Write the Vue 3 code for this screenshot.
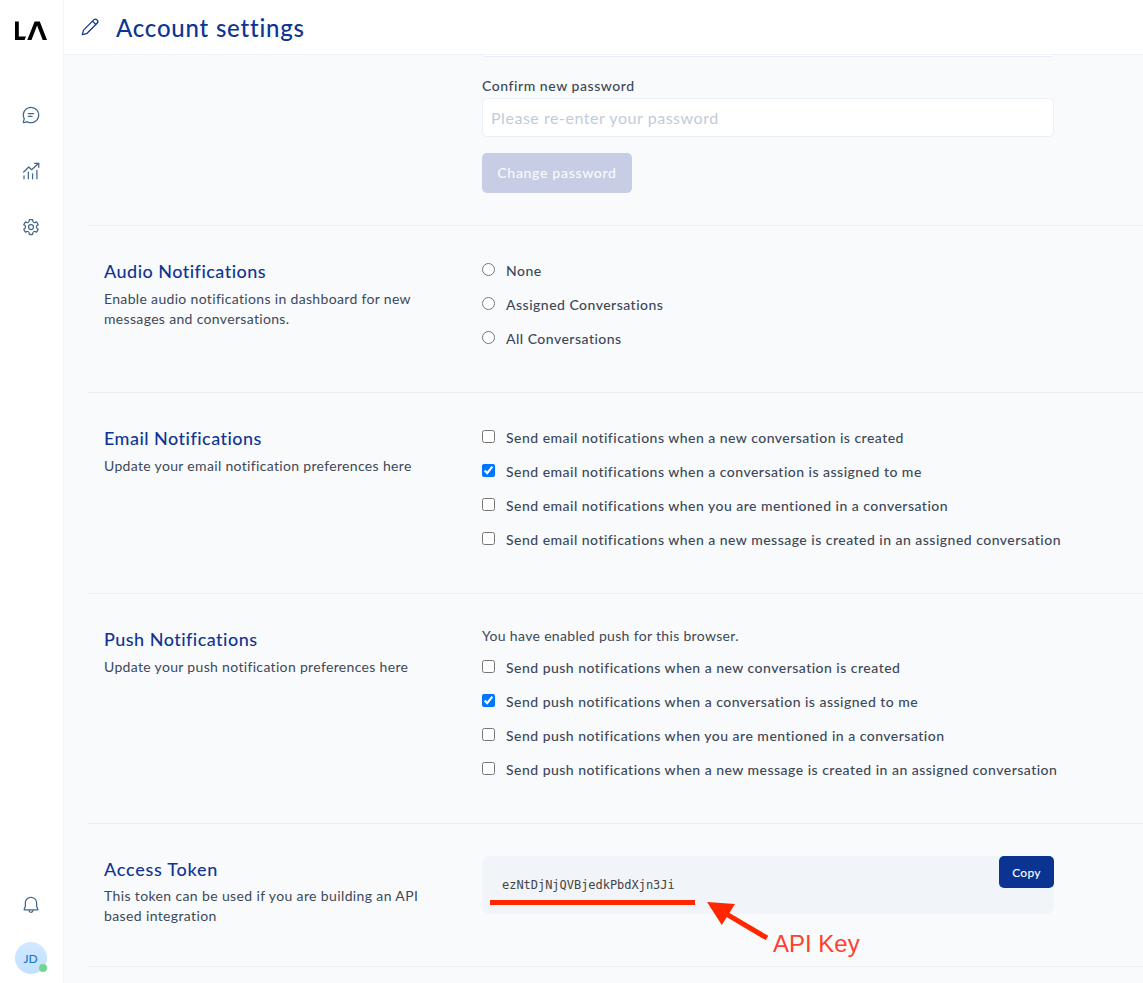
<script setup>
import { ref } from 'vue'

const audio = ref('')
const audioOptions = ['None', 'Assigned Conversations', 'All Conversations']

const email = ref([
  { text: 'Send email notifications when a new conversation is created', on: false },
  { text: 'Send email notifications when a conversation is assigned to me', on: true },
  { text: 'Send email notifications when you are mentioned in a conversation', on: false },
  { text: 'Send email notifications when a new message is created in an assigned conversation', on: false },
])
const push = ref([
  { text: 'Send push notifications when a new conversation is created', on: false },
  { text: 'Send push notifications when a conversation is assigned to me', on: true },
  { text: 'Send push notifications when you are mentioned in a conversation', on: false },
  { text: 'Send push notifications when a new message is created in an assigned conversation', on: false },
])
</script>

<template>
  <div class="app">
    <aside class="sidebar">
      <svg class="logo" viewBox="0 0 32 20" width="32" height="20">
        <path d="M0 0.5H3.8V15.4H11L9.6 19H0Z" />
        <path d="M12.3 19 19.6 0.5H24.8L32 19H27.7L22.1 4.6 16.5 19Z" />
      </svg>
      <nav class="nav">
        <svg class="icon" viewBox="0 0 24 24"><path d="M12 2c5.523 0 10 4.477 10 10s-4.477 10-10 10a9.96 9.96 0 0 1-4.587-1.112l-3.826 1.067a1.25 1.25 0 0 1-1.54-1.54l1.068-3.823A9.96 9.96 0 0 1 2 12C2 6.477 6.477 2 12 2Zm0 1.5A8.5 8.5 0 0 0 3.5 12c0 1.47.373 2.883 1.073 4.137l.15.27-1.112 3.984 3.987-1.112.27.15A8.5 8.5 0 1 0 12 3.5ZM8.75 13h4.498a.75.75 0 0 1 .102 1.493l-.102.007H8.75a.75.75 0 0 1-.102-1.493L8.75 13h4.498H8.75Zm0-3.5h6.505a.75.75 0 0 1 .101 1.493l-.101.007H8.75a.75.75 0 0 1-.102-1.493L8.75 9.5h6.505H8.75Z" /></svg>
        <svg class="icon line" viewBox="0 0 24 24"><path d="M3.2 13.2 9.3 7.2 12.8 10.4 21.1 2.8M16.3 2.7H21.3V7.6M3.6 17.8V21.3M8.8 13.2V21.3M13.9 15.4V21.3M19.1 11.2V21.3" /></svg>
        <svg class="icon" viewBox="0 0 24 24"><path d="M12.012 2.25c.734.008 1.465.093 2.182.253a.75.75 0 0 1 .582.649l.17 1.527a1.384 1.384 0 0 0 1.927 1.116l1.401-.615a.75.75 0 0 1 .85.174 9.792 9.792 0 0 1 2.204 3.792.75.75 0 0 1-.271.825l-1.242.916a1.381 1.381 0 0 0 0 2.226l1.243.915a.75.75 0 0 1 .272.826 9.797 9.797 0 0 1-2.204 3.792.75.75 0 0 1-.848.175l-1.407-.617a1.38 1.38 0 0 0-1.926 1.114l-.169 1.526a.75.75 0 0 1-.572.647 9.518 9.518 0 0 1-4.406 0 .75.75 0 0 1-.572-.647l-.168-1.524a1.382 1.382 0 0 0-1.926-1.11l-1.406.616a.75.75 0 0 1-.849-.175 9.798 9.798 0 0 1-2.204-3.796.75.75 0 0 1 .272-.826l1.243-.916a1.38 1.38 0 0 0 0-2.226l-1.243-.914a.75.75 0 0 1-.271-.826 9.793 9.793 0 0 1 2.204-3.792.75.75 0 0 1 .85-.174l1.4.615a1.387 1.387 0 0 0 1.93-1.118l.17-1.526a.75.75 0 0 1 .583-.65c.717-.159 1.45-.243 2.201-.252Zm0 1.5a9.135 9.135 0 0 0-1.354.117l-.109.977A2.886 2.886 0 0 1 6.525 7.17l-.898-.394a8.293 8.293 0 0 0-1.348 2.317l.798.587a2.881 2.881 0 0 1 0 4.643l-.799.588c.32.842.776 1.626 1.348 2.322l.905-.397a2.882 2.882 0 0 1 4.017 2.318l.11.984c.889.15 1.798.15 2.687 0l.11-.984a2.881 2.881 0 0 1 4.018-2.322l.905.396a8.296 8.296 0 0 0 1.347-2.318l-.798-.588a2.881 2.881 0 0 1 0-4.643l.796-.587a8.293 8.293 0 0 0-1.348-2.317l-.896.393a2.884 2.884 0 0 1-4.023-2.324l-.11-.976a8.988 8.988 0 0 0-1.333-.117ZM12 8.25a3.75 3.75 0 1 1 0 7.5 3.75 3.75 0 0 1 0-7.5Zm0 1.5a2.25 2.25 0 1 0 0 4.5 2.25 2.25 0 0 0 0-4.5Z" /></svg>
      </nav>
      <svg class="icon bell" viewBox="0 0 24 24"><path d="M12 1.996a7.49 7.49 0 0 1 7.496 7.25l.004.25v4.097l1.38 3.156a1.25 1.25 0 0 1-1.145 1.75L15 18.502a3 3 0 0 1-5.995.177L9 18.499H4.275a1.251 1.251 0 0 1-1.147-1.747L4.5 13.594V9.496c0-4.155 3.352-7.5 7.5-7.5ZM13.5 18.5l-3 .002a1.5 1.5 0 0 0 2.993.145l.006-.147ZM12 3.496c-3.32 0-6 2.674-6 6v4.41L4.656 17h14.697L18 13.907V9.509l-.004-.225A5.988 5.988 0 0 0 12 3.496Z" /></svg>
      <div class="avatar">JD<span class="status"></span></div>
    </aside>

    <div class="main">
      <header class="header">
        <svg class="edit" viewBox="0 0 24 24"><path d="M21.03 2.97a3.578 3.578 0 0 1 0 5.06L9.062 20a2.25 2.25 0 0 1-.999.58l-5.116 1.395a.75.75 0 0 1-.92-.921l1.395-5.116a2.25 2.25 0 0 1 .58-.999L15.97 2.97a3.578 3.578 0 0 1 5.06 0ZM15 6.06 5.062 16a.75.75 0 0 0-.193.333l-1.05 3.85 3.85-1.05A.75.75 0 0 0 8 18.938L17.94 9 15 6.06Zm2.03-2.03-.97.97L19 7.94l.97-.97a2.079 2.079 0 0 0-2.94-2.94Z" /></svg>
        <h1>Account settings</h1>
      </header>

      <div class="content">
        <section class="section password">
          <div class="intro"></div>
          <div class="fields">
            <div class="field-end"></div>
            <label class="field-label" for="confirm">Confirm new password</label>
            <input id="confirm" class="text-input" type="password" placeholder="Please re-enter your password" />
            <button class="change" disabled>Change password</button>
          </div>
        </section>

        <section class="section">
          <div class="intro">
            <h2>Audio Notifications</h2>
            <p>Enable audio notifications in dashboard for new<br />messages and conversations.</p>
          </div>
          <div class="fields">
            <label v-for="o in audioOptions" :key="o" class="option">
              <input v-model="audio" type="radio" name="audio" :value="o" /><span>{{ o }}</span>
            </label>
          </div>
        </section>

        <section class="section">
          <div class="intro">
            <h2>Email Notifications</h2>
            <p>Update your email notification preferences here</p>
          </div>
          <div class="fields">
            <label v-for="o in email" :key="o.text" class="option">
              <input v-model="o.on" type="checkbox" /><span>{{ o.text }}</span>
            </label>
          </div>
        </section>

        <section class="section">
          <div class="intro">
            <h2>Push Notifications</h2>
            <p>Update your push notification preferences here</p>
          </div>
          <div class="fields">
            <p class="push-state">You have enabled push for this browser.</p>
            <label v-for="o in push" :key="o.text" class="option">
              <input v-model="o.on" type="checkbox" /><span>{{ o.text }}</span>
            </label>
          </div>
        </section>

        <section class="section">
          <div class="intro token-intro">
            <h2>Access Token</h2>
            <p>This token can be used if you are building an API<br />based integration</p>
          </div>
          <div class="fields">
            <div class="token">
              <code>ezNtDjNjQVBjedkPbdXjn3Ji</code>
              <button class="copy">Copy</button>
              <div class="underline"></div>
              <svg class="arrow" viewBox="0 0 62 38" width="62" height="38">
                <path class="shaft" d="M60 36 20 12.3" />
                <path class="head" d="M0 0 28 2 14.8 23Z" />
              </svg>
              <span class="note">API Key</span>
            </div>
          </div>
        </section>
        <div class="section last"></div>
      </div>
    </div>
  </div>
</template>

<style>
body {
  margin: 0;
  overflow: hidden;
}
</style>

<style scoped>
.app {
  display: flex;
  height: 983px;
  overflow: hidden;
  background: #f9fafc;
  color: #3c4858;
  font-family: Lato, "Open Sans", sans-serif;
  font-size: 14px;
}
.app * {
  box-sizing: border-box;
}
.sidebar {
  display: flex;
  flex-direction: column;
  align-items: center;
  flex: none;
  width: 64px;
  padding: 21px 2px 9px 0;
  background: #fff;
  border-right: 1px solid #f0f4f8;
}
.logo {
  display: block;
  fill: #000;
}
.nav {
  display: flex;
  flex-direction: column;
  gap: 36px;
  margin-top: 64px;
}
.icon {
  display: block;
  width: 20px;
  height: 20px;
  fill: #446888;
}
.line {
  fill: none;
  stroke: #446888;
  stroke-width: 1.5;
  stroke-linecap: round;
  stroke-linejoin: round;
}
.bell {
  margin-top: auto;
}
.avatar {
  position: relative;
  display: flex;
  align-items: center;
  justify-content: center;
  width: 32px;
  height: 32px;
  margin-top: 27px;
  border-radius: 50%;
  background: linear-gradient(#d2e8ff, #c2e1ff);
  color: #1976cc;
  font: 500 12px Lato, sans-serif;
  padding-top: 1px;
}
.status {
  position: absolute;
  right: 0;
  bottom: 2px;
  width: 8px;
  height: 8px;
  border-radius: 50%;
  background: #6fd88e;
}
.main {
  flex: 1;
  min-width: 0;
}
.header {
  display: flex;
  align-items: center;
  height: 55px;
  padding-left: 16px;
  background: #fff;
  border-bottom: 1px solid #f0f4f8;
}
.edit {
  width: 20px;
  height: 20px;
  fill: #0e3594;
}
h1 {
  margin: 1px 0 0 16px;
  color: #0e3594;
  font-size: 24px;
  line-height: 32px;
  font-weight: 500;
  letter-spacing: 0.78px;
}
.content {
  padding-left: 24px;
}
.section {
  display: grid;
  grid-template-columns: 378px 572px;
  padding: 32px 16px;
  border-top: 1px solid #ebf0f5;
}
.password {
  padding-top: 0;
  border-top: 0;
}
.last {
  padding: 0;
}
h2 {
  margin: 2px 0 0;
  color: #0e3594;
  font-size: 18px;
  line-height: 22px;
  font-weight: 500;
  letter-spacing: 0.47px;
}
p {
  margin: 7px 0 0;
  font-size: 14px;
  line-height: 20px;
  letter-spacing: 0.33px;
  white-space: nowrap;
}
.token-intro h2 {
  letter-spacing: 0.75px;
}
.token-intro p {
  margin-top: 6px;
  letter-spacing: 0.37px;
}
.field-end {
  height: 2px;
  border: 1px solid #ebf0f5;
  border-top: 0;
  border-radius: 0 0 4px 4px;
  background: #fff;
}
.field-label {
  display: block;
  margin-top: 19px;
  font-weight: 500;
  line-height: 20px;
  letter-spacing: 0.55px;
}
.text-input {
  display: block;
  width: 572px;
  height: 39px;
  margin-top: 2px;
  padding: 0 8px;
  border: 1px solid #ebf0f5;
  border-radius: 5px;
  background: #fff;
  font: 16px Lato, sans-serif;
  letter-spacing: 0.54px;
}
.text-input::placeholder {
  color: #c0ccda;
  opacity: 1;
}
.change {
  display: block;
  width: 150px;
  height: 40px;
  margin-top: 16px;
  padding: 0 0 1px;
  border: 0;
  border-radius: 5px;
  background: #c6cde5;
  color: #f9fafc;
  font: 500 14px Lato, sans-serif;
  letter-spacing: 0.7px;
}
.option {
  display: flex;
  align-items: flex-start;
  height: 34px;
  font-weight: 500;
  line-height: 26px;
  letter-spacing: 0.48px;
  white-space: nowrap;
}
.option input {
  width: 13px;
  height: 13px;
  margin: 5px 11px 0 0;
}
.push-state {
  height: 29px;
  margin: 0;
}
.token {
  position: relative;
  display: flex;
  justify-content: space-between;
  align-items: flex-start;
  height: 58px;
  margin-bottom: 20px;
  padding-left: 20px;
  border-radius: 8px;
  background: #f1f4f8;
}
code {
  color: #444;
  font: 12px/20px "DejaVu Sans Mono", monospace;
  letter-spacing: -0.03px;
  padding-top: 19px;
}
.copy {
  width: 55px;
  height: 32px;
  padding: 1px 0 0;
  border: 0;
  border-radius: 5px;
  background: #0b3492;
  color: #fff;
  font: 500 12px Lato, sans-serif;
  letter-spacing: 0.3px;
}
.underline {
  position: absolute;
  left: 8px;
  top: 44px;
  width: 205px;
  height: 5px;
  background: #ff2600;
}
.arrow {
  position: absolute;
  left: 225px;
  top: 46px;
}
.shaft {
  fill: none;
  stroke: #ff2600;
  stroke-width: 5;
}
.head {
  fill: #ff2600;
}
.note {
  position: absolute;
  left: 291px;
  top: 74px;
  color: #ff4030;
  font: 24px/28px "Liberation Sans", Arial, sans-serif;
  white-space: nowrap;
}
</style>
